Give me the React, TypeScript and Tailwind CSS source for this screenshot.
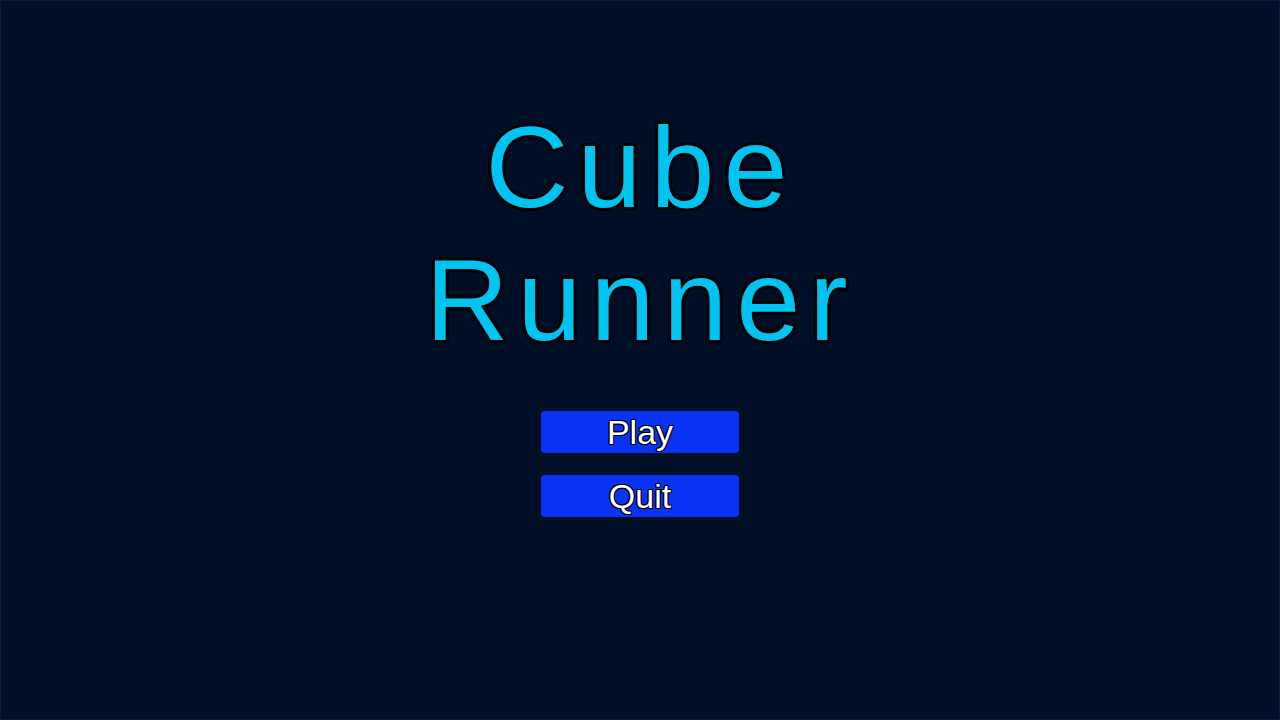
import React from 'react';

const titleOutline =
  '[text-shadow:-2px_-2px_0_#000,2px_-2px_0_#000,-2px_2px_0_#000,2px_2px_0_#000,0_-3px_0_#000,0_3px_0_#000,-3px_0_0_#000,3px_0_0_#000]';

function MenuButton({ label }: { label: string }) {
  return (
    <button className="w-[198px] h-[42px] rounded-[4px] bg-[#0a32f5] text-white text-[34px] leading-none flex items-center justify-center [text-shadow:-1px_-1px_0_#000,1px_-1px_0_#000,-1px_1px_0_#000,1px_1px_0_#000,0_-1px_0_#000,0_1px_0_#000,-1px_0_0_#000,1px_0_0_#000]">
      {label}
    </button>
  );
}

export default function App() {
  return (
    <div className="w-[1280px] h-[720px] bg-[#000e26] border border-[#0c1c3c] flex flex-col items-center font-['Liberation_Sans',Arial,sans-serif]">
      <h1
        className={`mt-[100px] text-center text-[#00c3f2] text-[115px] leading-[133px] tracking-[9px] pl-[2px] ${titleOutline}`}
      >
        Cube
        <br />
        Runner
      </h1>
      <div className="mt-[44px] flex flex-col gap-[22px]">
        <MenuButton label="Play" />
        <MenuButton label="Quit" />
      </div>
    </div>
  );
}
